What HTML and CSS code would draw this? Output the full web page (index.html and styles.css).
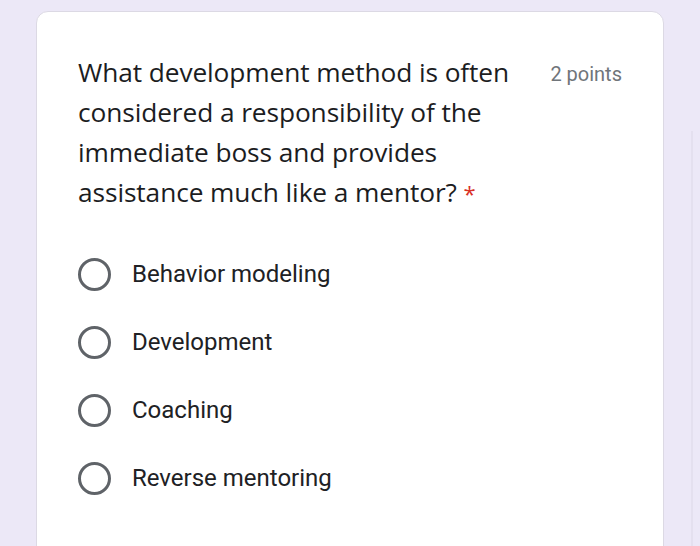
FILE: index.html
```html
<!DOCTYPE html>
<html>
<head>
<meta charset="utf-8">
<link rel="stylesheet" href="styles.css">
</head>
<body>
<div class="page">
  <div class="card">
    <div class="header">
      <div class="question">What development method is often considered a responsibility of the immediate boss and provides assistance much like a mentor? <span class="req">*</span></div>
      <div class="points">2 points</div>
    </div>
    <div class="options">
      <div class="option"><span class="radio"></span><span class="label">Behavior modeling</span></div>
      <div class="option"><span class="radio"></span><span class="label">Development</span></div>
      <div class="option"><span class="radio"></span><span class="label">Coaching</span></div>
      <div class="option"><span class="radio"></span><span class="label">Reverse mentoring</span></div>
    </div>
  </div>
  <div class="edge"></div>
</div>
</body>
</html>
```
FILE: styles.css
```css
html, body {
  margin: 0;
  padding: 0;
  background: #ece8f7;
  height: 546px;
  overflow: hidden;
}
.page {
  display: flex;
  padding: 11px 0 0 36px;
  gap: 27px;
}
.card {
  width: 628px;
  height: 600px;
  background: #fff;
  border: 1px solid #dcd9e4;
  border-radius: 12px;
  padding: 0 0 0 41px;
  box-sizing: border-box;
}
.header {
  display: flex;
  justify-content: space-between;
  padding: 40px 41px 0 0;
}
.question {
  width: 450px;
  font-family: "Open Sans", sans-serif;
  font-size: 26.3px;
  line-height: 40px;
  color: #1c1d1f;
  letter-spacing: -0.1px;
}
.req {
  color: #d93025;
  font-size: 22px;
}
.points {
  font-family: Roboto, sans-serif;
  font-size: 20px;
  color: #70757a;
  padding-top: 10px;
}
.options {
  display: flex;
  flex-direction: column;
  gap: 34px;
  padding-top: 44px;
}
.option {
  display: flex;
  align-items: center;
  height: 34px;
}
.radio {
  width: 27px;
  height: 27px;
  border: 3.5px solid #5f6368;
  border-radius: 50%;
  flex: none;
}
.label {
  margin-left: 21px;
  font-family: Roboto, sans-serif;
  font-size: 24px;
  color: #202124;
}
.edge {
  width: 2px;
  height: 546px;
  background: #e4e0ef;
  margin-top: 120px;
}
```
